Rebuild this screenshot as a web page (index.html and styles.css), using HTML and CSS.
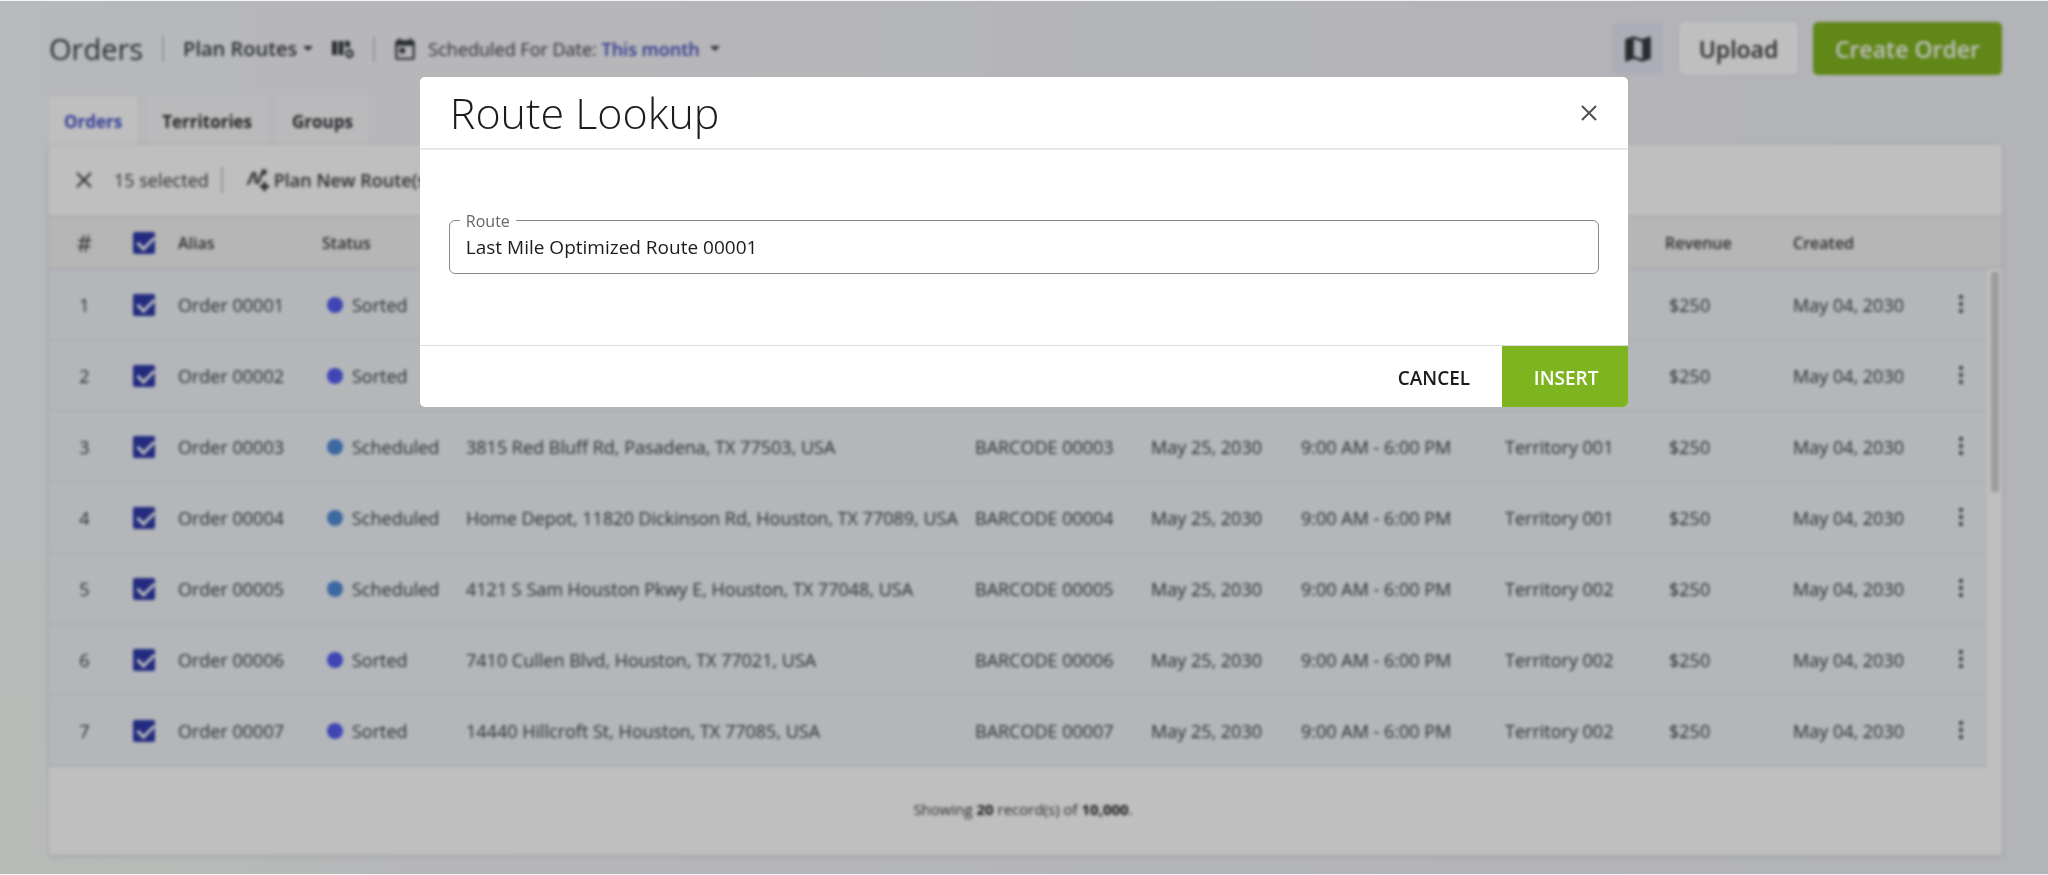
FILE: index.html
```html
<!DOCTYPE html>
<html lang="en">
<head>
<meta charset="utf-8">
<title>Orders</title>
<link rel="stylesheet" href="styles.css">
</head>
<body>
<div class="app">
  <header class="topbar">
    <h1 class="page-title">Orders</h1>
    <span class="divider"></span>
    <button class="plan-menu" type="button">Plan Routes <span class="caret"></span></button>
    <button class="icon-button columns-button" type="button">
      <svg width="24" height="24" viewBox="0 0 24 24" fill="currentColor"><path d="M2 4h5v14H2zM8.500 4h5v14h-5zM15 4h5v6h-5z"/><path fill-rule="evenodd" d="M18.200 12h2.600l.5 1.500 1.500-.3 1 2.200-1 1.200 1 1.200-1 2.200-1.500-.3-.5 1.500h-2.600l-.5-1.500-1.500.3-1-2.200 1-1.200-1-1.200 1-2.200 1.500.3zM19.500 14.500a2 2 0 1 0 0 4 2 2 0 0 0 0-4z"/></svg>
    </button>
    <span class="divider"></span>
    <button class="date-filter" type="button">
      <svg width="26" height="26" viewBox="0 0 24 24" fill="currentColor"><path d="M19 4h-1V2h-2v2H8V2H6v2H5c-1.110 0-2 .9-2 2v14c0 1.100.890 2 2 2h14c1.100 0 2-.9 2-2V6c0-1.100-.9-2-2-2zm0 16H5V9h14v11zM7 11h5v5H7z"/></svg>
      <span>Scheduled For Date: <span class="accent">This month</span></span>
      <span class="caret"></span>
    </button>
    <div class="actions">
      <button class="map-button" type="button">
        <svg width="34" height="34" viewBox="0 0 24 24" fill="currentColor"><path d="M20.500 3l-.16.030L15 5.100 9 3 3.360 4.900c-.21.070-.36.250-.36.480V20.500c0 .28.220.5.5.5l.16-.03L9 18.900l6 2.100 5.640-1.900c.21-.07.360-.25.360-.48V3.500c0-.28-.22-.5-.5-.5zM15 19l-6-2.110V5l6 2.110V19z"/></svg>
      </button>
      <button class="upload-button" type="button">Upload</button>
      <button class="create-button" type="button">Create Order</button>
    </div>
  </header>

  <nav class="tabs">
    <a class="tab tab-active" href="#orders">Orders</a>
    <a class="tab" href="#territories">Territories</a>
    <a class="tab" href="#groups">Groups</a>
  </nav>

  <main class="panel">
    <div class="selection-bar">
      <button class="icon-button" type="button">
        <svg width="16" height="16" viewBox="0 0 16 16" fill="none" stroke="currentColor" stroke-width="2"><path d="M1 1l14 14M15 1L1 15"/></svg>
      </button>
      <span class="selected-count">15 selected</span>
      <span class="divider"></span>
      <button class="plan-new" type="button">
        <svg width="24" height="24" viewBox="0 0 24 24" fill="none" stroke="currentColor" stroke-width="2.500"><path d="M1 16C5 16 5 5 8 5s0 10 3 10 3-9 6-10"/><circle cx="18" cy="4" r="1.500"/><path d="M18.500 14v9M14 18.500h9" stroke-width="3"/></svg>
        Plan New Route(s)
      </button>
    </div>
    <div class="grid-area">
      <table class="orders">
        <colgroup><col class="c-num"><col class="c-check"><col class="c-alias"><col class="c-status"><col><col class="c-barcode"><col class="c-date"><col class="c-time"><col class="c-territory"><col class="c-revenue"><col class="c-created"><col class="c-menu"></colgroup>
        <thead>
          <tr><th class="num">#</th><th class="check"><input type="checkbox" checked></th><th>Alias</th><th>Status</th><td></td><td></td><td></td><td></td><td></td><th>Revenue</th><th>Created</th><td></td></tr>
        </thead>
        <tbody id="rows"></tbody>
      </table>
      <div class="scroll-track"><div class="scroll-head"></div><div class="scroll-thumb"></div></div>
    </div>
    <footer class="records"><span>Showing <b>20</b> record(s) of <b>10,000</b>.</span></footer>
  </main>
</div>

<div class="overlay">
  <section class="modal" role="dialog" aria-labelledby="modal-title">
    <header class="modal-header">
      <h2 class="modal-title" id="modal-title">Route Lookup</h2>
      <button class="icon-button" type="button">
        <svg width="16" height="16" viewBox="0 0 16 16" fill="none" stroke="currentColor" stroke-width="2"><path d="M1 1l14 14M15 1L1 15"/></svg>
      </button>
    </header>
    <div class="modal-body">
      <fieldset class="field">
        <legend><label for="route">Route</label></legend>
        <input id="route" type="text" value="Last Mile Optimized Route 00001">
      </fieldset>
    </div>
    <footer class="modal-footer">
      <button class="cancel" type="button">CANCEL</button>
      <button class="insert" type="button">INSERT</button>
    </footer>
  </section>
</div>
<script src="orders.js"></script>
</body>
</html>
```

FILE: styles.css
```css
* { box-sizing: border-box; }

body {
  margin: 0;
  min-height: 100vh;
  font-family: "Open Sans", "Noto Sans", sans-serif;
  font-size: 18px;
  color: #37393d;
  background:
    radial-gradient(circle at 0 100%, #f7faf5 0, rgba(247, 250, 245, 0) 20%),
    linear-gradient(90deg, #f4f7f9 0, #f4f4f8 30%, #f1f2f7 60%, #eff0f6 100%);
}

button {
  font: inherit;
  color: inherit;
  border: 0;
  padding: 0;
  background: none;
  display: flex;
  align-items: center;
  justify-content: center;
}

svg { display: block; }

.app {
  min-height: 100vh;
  padding: 22px 46px 20px 49px;
  display: flex;
  flex-direction: column;
  filter: blur(1px);
}

.topbar { display: flex; align-items: center; height: 53px; }
.page-title { margin: 0 19px 0 0; font-size: 29px; font-weight: 500; line-height: 40px; }
.divider { width: 2px; height: 26px; background: #c9cbd0; }
.plan-menu { margin-left: 19px; gap: 6px; font-size: 20px; font-weight: 600; }
.caret { border: 5px solid transparent; border-top-color: currentColor; border-bottom: 0; }
.columns-button { margin: 0 19px 0 17px; }
.date-filter { margin-left: 17px; gap: 10px; }
.accent { color: #3f46b8; font-weight: 600; }

.actions { margin-left: auto; display: flex; align-items: center; gap: 15px; }
.actions button { height: 53px; border-radius: 5px; font-size: 23px; font-weight: 600; }
.actions .map-button { width: 52px; background: #e6e9f5; }
.actions .upload-button { width: 119px; background: #fff; box-shadow: 0 0 3px #d0d2d8; }
.actions .create-button { width: 189px; color: #fff; background: #80b420; }

.tabs { display: flex; gap: 10px; margin-top: 21px; height: 49px; }
.tab {
  display: flex;
  align-items: center;
  padding: 1px 15px 0;
  font-size: 17px;
  font-weight: 700;
  color: #2c2d30;
  text-decoration: none;
  background: #f9f9fb;
  border-radius: 4px 4px 0 0;
}
.tab-active { color: #4650c8; background: #fff; }

.panel {
  display: flex;
  flex-direction: column;
  flex: 1;
  background: #fff;
  border-radius: 0 4px 4px 4px;
  box-shadow: 0 1px 5px #cfd3da;
}

.selection-bar { display: flex; align-items: center; height: 70px; padding-left: 27px; }
.selected-count { margin: 0 12px 0 22px; }
.plan-new { margin-left: 23px; gap: 4px; font-weight: 600; }

.grid-area { display: flex; }
.orders { flex: 1; width: 0; table-layout: fixed; border-collapse: collapse; }
.orders th, .orders td { padding: 0; text-align: left; white-space: nowrap; }
.orders thead tr {
  height: 53px;
  font-size: 16px;
  background: #f3f3f3;
  border-top: 2px solid #e8e8e8;
  border-bottom: 2px solid #e4e6ea;
}
.orders th { font-weight: 600; }
.orders tbody tr { height: 71px; background: #f0f4f9; border-bottom: 2px solid #e7eaef; }
.orders .num { text-align: center; }
.orders th.num { font-size: 23px; font-weight: 400; line-height: 24px; }
.orders .check { padding-left: 13px; }
.orders .money { padding-left: 4px; }
.orders .more { padding-left: 20px; }

.c-num { width: 71px; }
.c-check { width: 58px; }
.c-alias, .c-status { width: 144px; }
.c-barcode { width: 176px; }
.c-date { width: 150px; }
.c-time { width: 204px; }
.c-territory { width: 160px; }
.c-revenue { width: 128px; }
.c-created { width: 143px; }
.c-menu { width: 51px; }

.orders input {
  display: block;
  appearance: none;
  width: 22px;
  height: 22px;
  margin: 0;
  border-radius: 2px;
  background: #2f3aaa;
}
.orders input::after {
  content: "";
  display: block;
  width: 7px;
  height: 14px;
  margin: 1px 0 0 8px;
  border: solid #fff;
  border-width: 0 3px 3px 0;
  transform: rotate(45deg);
}

.status { display: flex; align-items: center; gap: 9px; padding-left: 5px; }
.dot { width: 16px; height: 16px; border-radius: 50%; }
.dot-sorted { background: #555cf0; }
.dot-scheduled { background: #508cd8; }

.scroll-track { width: 15px; }
.scroll-head {
  height: 54px;
  background: #f3f3f3;
  border-top: 2px solid #e8e8e8;
  border-bottom: 2px solid #e4e6ea;
}
.scroll-thumb { width: 8px; height: 220px; margin: 3px 0 0 4px; border-radius: 2px; background: #d2d2d2; }

.records {
  flex: 1;
  display: flex;
  align-items: center;
  justify-content: center;
  padding: 0 5px 4px 0;
  font-size: 15px;
}
.records b { color: #1f2023; }

.overlay {
  position: fixed;
  inset: 1px 0;
  display: flex;
  justify-content: center;
  align-items: flex-start;
  padding-top: 76px;
  background: rgba(0, 0, 0, 0.25);
  backdrop-filter: blur(1px);
}

.modal { width: 59%; background: #fff; border-radius: 5px; overflow: hidden; color: #1c1c1c; }
.modal-header {
  display: flex;
  align-items: center;
  justify-content: space-between;
  height: 73px;
  padding: 0 31px 0 30px;
  border-bottom: 2px solid #e8e8e8;
}
.modal-title { margin: 0; font-size: 43px; font-weight: 300; line-height: 60px; }
.modal-header .icon-button { color: #505050; }
.modal-body { padding: 60px 29px 71px; }
.field {
  display: flex;
  margin: 0;
  padding: 0 16px 9px 10px;
  min-width: 0;
  border: 1px solid #8a8a8a;
  border-radius: 6px;
}
.field legend { padding: 2px 6px 0; font-size: 16px; line-height: 18px; color: #666; }
.field input {
  flex: 1;
  height: 34px;
  padding: 0 0 0 6px;
  border: 0;
  outline: 0;
  font: inherit;
  font-size: 19px;
  color: #1c1c1c;
  background: none;
}
.modal-footer {
  display: flex;
  justify-content: flex-end;
  height: 62px;
  border-top: 1px solid #dcdcdc;
  font-size: 19px;
  font-weight: 600;
}
.cancel { padding: 3px 32px 0; }
.modal-footer .insert { width: 126px; padding: 3px 0 0 2px; color: #fff; background: #7fb421; }
```

FILE: orders.js
```js
const orders = [
  ["Sorted"],
  ["Sorted"],
  ["Scheduled", "3815 Red Bluff Rd, Pasadena, TX 77503, USA", "Territory 001"],
  ["Scheduled", "Home Depot, 11820 Dickinson Rd, Houston, TX 77089, USA", "Territory 001"],
  ["Scheduled", "4121 S Sam Houston Pkwy E, Houston, TX 77048, USA", "Territory 002"],
  ["Sorted", "7410 Cullen Blvd, Houston, TX 77021, USA", "Territory 002"],
  ["Sorted", "14440 Hillcroft St, Houston, TX 77085, USA", "Territory 002"]
];

document.getElementById("rows").innerHTML = orders.map(([status, address, territory], i) => {
  const n = i + 1;
  const visit = address
    ? `<td>${address}</td><td>BARCODE 0000${n}</td><td>May 25, 2030</td><td>9:00 AM - 6:00 PM</td><td>${territory}</td>`
    : "<td></td><td></td><td></td><td></td><td></td>";
  return `<tr>
    <td class="num">${n}</td>
    <td class="check"><input type="checkbox" checked></td>
    <td>Order 0000${n}</td>
    <td><span class="status"><span class="dot dot-${status.toLowerCase()}"></span>${status}</span></td>
    ${visit}
    <td class="money">$250</td>
    <td>May 04, 2030</td>
    <td class="more"><button class="icon-button" type="button"><svg width="10" height="24" viewBox="0 0 10 24" fill="currentColor"><circle cx="5" cy="4" r="2"/><circle cx="5" cy="11" r="2"/><circle cx="5" cy="18" r="2"/></svg></button></td>
  </tr>`;
}).join("");
```
